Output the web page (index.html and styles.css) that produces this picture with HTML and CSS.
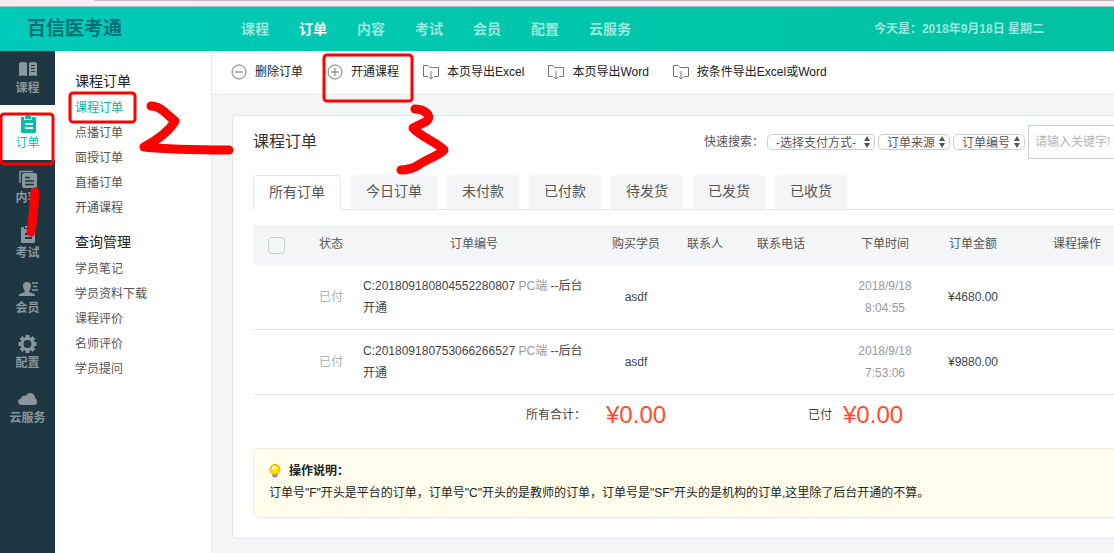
FILE: index.html
```html
<!DOCTYPE html>
<html lang="zh-CN">
<head>
<meta charset="utf-8">
<title>百信医考通 - 课程订单</title>
<link rel="stylesheet" href="styles.css">
</head>
<body>
<div class="chrome"></div>
<header class="header">
  <div class="logo">百信医考通</div>
  <nav class="topnav">
    <a href="#">课程</a><a href="#" class="on">订单</a><a href="#">内容</a><a href="#">考试</a><a href="#">会员</a><a href="#">配置</a><a href="#">云服务</a>
  </nav>
  <div class="date">今天是：2018年9月18日 星期二</div>
</header>
<div class="layout">
  <nav class="rail">
    <a href="#"><svg width="20" height="18" viewBox="0 0 20 18"><path fill="currentColor" d="M1 3Q5 1 9 3V16Q5 15 1 16ZM11 3Q15 1 19 3V16Q15 15 11 16Z"/><path stroke="#1f3742" stroke-width="1" d="M13 5.500h4M13 8.500h4M13 11.500h4"/></svg>课程</a>
    <a href="#" class="on"><svg width="20" height="18" viewBox="0 0 20 18"><path fill="currentColor" d="M3 2h3v3h8V2h3q1 0 1 1v14q0 1-1 1H4q-1 0-1-1ZM7 1h1l1-1h2l1 1h1v3H7Z"/><path stroke="#fff" stroke-width="2" d="M7 9h8M7 13h8"/></svg>订单</a>
    <a href="#"><svg width="20" height="18" viewBox="0 0 20 18"><path fill="none" stroke="currentColor" stroke-width="1.500" d="M2 13V1.500H15"/><rect x="4" y="3" width="15" height="15" rx="2" fill="currentColor"/><path stroke="#1f3742" stroke-width="1.500" d="M7 7.500h5M7 11h9M7 14.500h9"/></svg>内容</a>
    <a href="#"><svg width="20" height="18" viewBox="0 0 20 18"><path fill="currentColor" d="M3 3q0-1 1-1h2v2h8V2h2q1 0 1 1v14q0 1-1 1H4q-1 0-1-1ZM7 1h6v2H7Z"/><path stroke="#1f3742" stroke-width="2" d="M7 9h7M7 13h7"/></svg>考试</a>
    <a href="#"><svg width="20" height="18" viewBox="0 0 20 18"><path fill="currentColor" d="M9 2c6 0 4 7 2 9 0 2 5 2 6 4v1H1v-1c1-2 6-2 6-4C5 9 3 2 9 2Z"/><path stroke="currentColor" stroke-width="1.500" d="M14 3h6M15 6.500h4M14 10h6"/></svg>会员</a>
    <a href="#"><svg width="20" height="18" viewBox="0 0 20 18"><circle cx="9.500" cy="9" r="5.500" fill="none" stroke="currentColor" stroke-width="3"/><path stroke="currentColor" stroke-width="4" d="M9.500 0v3M9.500 15v3M.5 9h3M15.500 9h3M3 2.500l2 2M14 13.500l2 2M16 2.500l-2 2M5 13.500l-2 2"/></svg>配置</a>
    <a href="#"><svg width="20" height="18" viewBox="0 0 20 18"><path fill="currentColor" d="M4 15C-1 15-1 9 3 8.500 4 5 6 5 8 6c2-5 9-3 9 2 3 2 3 7-1 7Z"/></svg>云服务</a>
  </nav>
  <aside class="submenu">
    <h2>课程订单</h2>
    <ul>
      <li><a href="#" class="on">课程订单</a></li><li><a href="#">点播订单</a></li><li><a href="#">面授订单</a></li><li><a href="#">直播订单</a></li><li><a href="#">开通课程</a></li>
    </ul>
    <h2>查询管理</h2>
    <ul>
      <li><a href="#">学员笔记</a></li><li><a href="#">学员资料下载</a></li><li><a href="#">课程评价</a></li><li><a href="#">名师评价</a></li><li><a href="#">学员提问</a></li>
    </ul>
  </aside>
  <main class="main">
    <div class="toolbar">
      <button type="button"><svg width="16" height="16" viewBox="0 0 16 16"><circle cx="8" cy="8" r="7"/><path d="M4 8h8"/></svg>删除订单</button>
      <button type="button"><svg width="16" height="16" viewBox="0 0 16 16"><circle cx="8" cy="8" r="7"/><path d="M4 8h8M8 4v8"/></svg>开通课程</button>
      <button type="button"><svg width="16" height="16" viewBox="0 0 16 16"><path d="M5 12.500H.5V1.500H5L7 3.500H15.500V12.500H11M8 7v8M6 13l2 2 2-2"/></svg>本页导出Excel</button>
      <button type="button"><svg width="16" height="16" viewBox="0 0 16 16"><path d="M5 12.500H.5V1.500H5L7 3.500H15.500V12.500H11M8 7v8M6 13l2 2 2-2"/></svg>本页导出Word</button>
      <button type="button"><svg width="16" height="16" viewBox="0 0 16 16"><path d="M5 12.500H.5V1.500H5L7 3.500H15.500V12.500H11M8 7v8M6 13l2 2 2-2"/></svg>按条件导出Excel或Word</button>
    </div>
    <section class="card">
      <div class="cardhead">
        <h1>课程订单</h1>
        <form class="search">
          <label for="pay">快速搜索：</label>
          <select id="pay" class="wide"><option>-选择支付方式-</option></select>
          <select aria-label="订单来源"><option>订单来源</option></select>
          <select aria-label="订单编号"><option>订单编号</option></select>
          <input type="text" aria-label="关键字" placeholder="请输入关键字!">
        </form>
      </div>
      <div class="tabs">
        <button type="button" class="on">所有订单</button><button type="button">今日订单</button><button type="button">未付款</button><button type="button">已付款</button><button type="button">待发货</button><button type="button">已发货</button><button type="button">已收货</button>
      </div>
      <table class="orders">
        <colgroup><col class="c-check"><col class="c-state"><col class="c-no"><col class="c-buyer"><col class="c-contact"><col class="c-phone"><col class="c-time"><col class="c-sum"><col class="c-ops"><col></colgroup>
        <thead>
          <tr><th><input type="checkbox" aria-label="全选"></th><th>状态</th><th>订单编号</th><th>购买学员</th><th>联系人</th><th>联系电话</th><th>下单时间</th><th>订单金额</th><th>课程操作</th><th></th></tr>
        </thead>
        <tbody>
          <tr><td></td><td class="paid">已付</td><td class="no">C:201809180804552280807 <span>PC端</span> --后台开通</td><td>asdf</td><td></td><td></td><td class="time">2018/9/18 8:04:55</td><td>¥4680.00</td><td></td><td></td></tr>
          <tr><td></td><td class="paid">已付</td><td class="no">C:201809180753066266527 <span>PC端</span> --后台开通</td><td>asdf</td><td></td><td></td><td class="time">2018/9/18 7:53:06</td><td>¥9880.00</td><td></td><td></td></tr>
        </tbody>
      </table>
      <div class="totals">
        <div class="total all">所有合计：<strong>¥0.00</strong></div>
        <div class="total">已付<strong>¥0.00</strong></div>
      </div>
      <div class="notice">
        <h3><svg width="12" height="14" viewBox="0 0 12 14"><path fill="#aaa" stroke="#777" d="M4 10h4v2.500q-2 1-4 0Z"/><circle cx="6" cy="5.500" r="5" fill="#ffe600" stroke="#f39a0c"/><circle cx="5" cy="4" r="2" fill="#fffbc0"/></svg>操作说明：</h3>
        <p>订单号"F"开头是平台的订单，订单号"C"开头的是教师的订单，订单号是"SF"开头的是机构的订单,这里除了后台开通的不算。</p>
      </div>
    </section>
  </main>
</div>
<svg class="marks" width="460" height="250" viewBox="0 0 460 250">
  <g class="thin"><rect x="1" y="114" width="52" height="50" rx="3"/><rect x="70" y="93" width="65" height="29" rx="3"/><rect x="324" y="55" width="88" height="46" rx="3"/></g>
  <g class="thick"><path d="M151 106C161 106 167 115 175 121C170 130 157 140 144 147C172 150 200 150 229 150"/><path d="M415 109C425 109 434 117 425 122L413 128C422 138 435 141 444 150C437 157 428 158 420 164C413 169 408 170 401 170"/><path d="M35 192C34 205 33 220 31 232"/></g>
</svg>
</body>
</html>
```
FILE: styles.css
```css
* { box-sizing: border-box; }
body {
  margin: 0;
  min-height: 100vh;
  display: flex;
  flex-direction: column;
  position: relative;
  overflow: hidden;
  font: 12px/22px "Liberation Sans", "Noto Sans CJK SC", sans-serif;
  color: #444;
  background: #f4f5f7;
}
a { color: inherit; text-decoration: none; }
h1, h2, h3, p, ul { margin: 0; padding: 0; font-weight: normal; }
ul { list-style: none; }
button, select, input { font: inherit; color: inherit; margin: 0; }
button { border: 0; background: none; padding: 0; cursor: pointer; white-space: nowrap; }

.chrome {
  height: 7px;
  background: linear-gradient(to right, transparent 95px, #b8b6b8 95px) top / 100% 1px no-repeat #f2f0f2;
  border-bottom: 1px solid #b8b8b8;
}
.header {
  height: 44px;
  display: flex;
  align-items: center;
  padding: 0 70px 0 27px;
  background: linear-gradient(to right, #00cab8, #00c2a0);
  color: #99e9dd;
  font-weight: bold;
}
.logo { width: 214px; font-size: 19px; color: #007078; }
.topnav { display: flex; gap: 30px; font-size: 14px; }
.topnav .on { color: #fff; }
.date { margin-left: auto; white-space: nowrap; }

.layout { flex: 1; display: flex; overflow: hidden; }
.rail { flex: none; width: 55px; background: #1f3742; color: #8a979d; font-weight: bold; }
.rail a {
  height: 55px;
  padding-top: 10px;
  display: flex;
  flex-direction: column;
  align-items: center;
  gap: 1px;
  line-height: 18px;
}
.rail a:first-child { height: 54px; padding-top: 9px; }
.rail svg { flex: none; }
.rail .on { background: #fff; color: #00bfae; font-weight: normal; }

.submenu {
  flex: none;
  width: 157px;
  padding: 16px 20px;
  background: #fff;
  border-right: 1px solid #e3e8ea;
  color: #555;
}
.submenu h2 { font-size: 14px; line-height: 28px; color: #222; }
.submenu ul { padding-top: 1px; margin-bottom: 7px; line-height: 25px; }
.submenu .on { color: #00b5a0; }

.main { flex: 1; min-width: 1040px; }
.toolbar {
  height: 44px;
  display: flex;
  align-items: center;
  gap: 24px;
  padding: 0 19px 2px;
  background: #fff;
  border-bottom: 1px solid #e3e8ea;
  color: #222;
}
.toolbar button { display: flex; align-items: center; gap: 8px; }
.toolbar svg { fill: none; stroke: #777; }

.card {
  margin: 20px 20px 14px;
  padding: 9px 20px 20px;
  background: #fff;
  border: 1px solid #e3e8ea;
  border-radius: 5px;
}
.cardhead { display: flex; align-items: center; }
.cardhead h1 { width: 451px; font-size: 16px; color: #333; }
.search { flex: 1; display: flex; align-items: center; gap: 3px; color: #555; }
.search label { white-space: nowrap; }
.search select {
  appearance: none;
  width: 72px;
  height: 16px;
  line-height: 16px;
  padding: 0 8px;
  border: 1px solid #c9d0d3;
  border-radius: 5px;
  background: url("data:image/svg+xml,%3Csvg xmlns='http://www.w3.org/2000/svg' width='6' height='12'%3E%3Cpath fill='%23555' d='M0 5L3 0L6 5ZM0 7L3 12L6 7Z'/%3E%3C/svg%3E") right 4px center no-repeat #fff;
}
.search .wide { width: 108px; }
.search input {
  flex: 1;
  height: 34px;
  min-width: 0;
  padding: 0 6px;
  border: 1px solid #c9d0d3;
}
.search input::placeholder { color: #b4b4b4; }

.tabs {
  display: flex;
  gap: 10px;
  height: 35px;
  margin: 16px 0 15px;
  box-shadow: inset 0 -1px #e3e8ea;
}
.tabs button {
  height: 34px;
  padding: 0 15px 2px;
  border-radius: 4px 4px 0 0;
  background: #f4f5f7;
  color: #555;
  font-size: 14px;
}
.tabs .on { height: 35px; background: #fff; border: 1px solid #e3e8ea; border-bottom: 0; }

.orders { width: 100%; table-layout: fixed; border-collapse: separate; border-spacing: 0; text-align: center; }
.c-check { width: 46px; }
.c-state { width: 64px; }
.c-no { width: 222px; }
.c-buyer { width: 102px; }
.c-contact { width: 34px; }
.c-phone { width: 120px; }
.c-time { width: 88px; }
.c-sum { width: 88px; }
.c-ops { width: 120px; }
.orders th { height: 40px; padding: 0 0 2px; background: #f4f5f7; font-weight: normal; color: #555; white-space: nowrap; }
.orders th:first-child { padding: 0; }
.orders td { height: 65px; padding: 0; border-bottom: 1px solid #e3e8ea; }
.orders input {
  appearance: none;
  display: block;
  width: 17px;
  height: 17px;
  margin: 0 auto;
  border: 1px solid #c9d0d3;
  border-radius: 4px;
}
.orders .no { text-align: left; }
.orders .no span, .orders .time { color: #999; }
.orders .paid { color: #aab4b6; }

.totals { display: flex; height: 40px; padding-left: 273px; }
.total { display: flex; align-items: center; gap: 11px; }
.total.all { width: 282px; gap: 20px; }
.total strong { font-size: 24px; font-weight: normal; color: #ff4e29; }

.notice {
  margin-top: 13px;
  padding: 11px 15px 13px;
  border: 1px solid #f1e9dd;
  border-radius: 5px;
  background: #fffdeb;
  color: #222;
}
.notice h3 { display: flex; align-items: center; gap: 8px; font-size: 12px; font-weight: bold; }

.marks { position: absolute; left: 0; top: 0; pointer-events: none; fill: none; stroke: #f00; stroke-linecap: round; stroke-linejoin: round; }
.marks .thin { stroke-width: 3px; }
.marks .thick { stroke-width: 9px; }
```
